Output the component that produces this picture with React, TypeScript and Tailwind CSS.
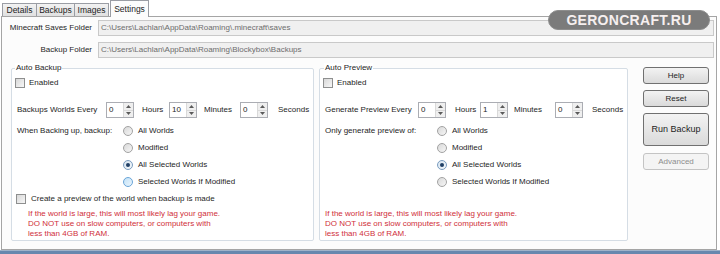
import React from "react";

function CheckBox() {
  return (
    <span className="block h-[10px] w-[10px] shrink-0 border border-[#8e8f8f] bg-linear-to-br from-[#d8d8d8] to-[#f7f7f7]" />
  );
}

function Radio({ checked = false, hover = false }: { checked?: boolean; hover?: boolean }) {
  return (
    <span
      className={
        hover
          ? "flex h-[10px] w-[10px] shrink-0 items-center justify-center rounded-full border border-[#6aa5d8] bg-linear-to-br from-[#c3e2f7] to-[#eaf5fd]"
          : checked
          ? "flex h-[10px] w-[10px] shrink-0 items-center justify-center rounded-full border border-[#7a9cbf] bg-linear-to-br from-[#d6e4f0] to-[#f4f8fb]"
          : "flex h-[10px] w-[10px] shrink-0 items-center justify-center rounded-full border border-[#a2a2a2] bg-linear-to-br from-[#d9d9d9] to-[#f6f6f6]"
      }
    >
      {checked && <span className="block h-[4px] w-[4px] rounded-full bg-[#1f3f66]" />}
    </span>
  );
}

function Spin({ value }: { value: string }) {
  return (
    <div className="flex h-[16px] w-[28px] shrink-0 border border-[#abadb3] bg-white">
      <span className="flex-1 pl-[2px] leading-[13px]">{value}</span>
      <div className="flex w-[10px] flex-col border-l border-[#d9d9d9] bg-[#efefef]">
        <div className="flex flex-1 items-center justify-center border-b border-[#d9d9d9]">
          <svg width="5" height="3" viewBox="0 0 5 3">
            <path d="M0 3L2.5 0L5 3Z" fill="#5a5a5a" />
          </svg>
        </div>
        <div className="flex flex-1 items-center justify-center">
          <svg width="5" height="3" viewBox="0 0 5 3">
            <path d="M0 0L2.5 3L5 0Z" fill="#5a5a5a" />
          </svg>
        </div>
      </div>
    </div>
  );
}

function Warning() {
  return (
    <div className="leading-[10px] text-[#d02f3a]">
      <p>If the world is large, this will most likely lag your game.</p>
      <p>DO NOT use on slow computers, or computers with</p>
      <p>less than 4GB of RAM.</p>
    </div>
  );
}

const choices = ["All Worlds", "Modified", "All Selected Worlds", "Selected Worlds If Modified"];

export default function App() {
  return (
    <div className="relative h-[254px] w-[720px] overflow-hidden bg-white font-['Liberation_Sans',Arial,sans-serif] text-[8px] text-[#1e1e1e]">
      {/* tabs */}
      <div className="relative z-10 flex h-[16px] items-end pl-[2px] text-[8.5px]">
        <div className="flex h-[13px] w-[35px] items-center justify-center border border-b-0 border-[#9a9da4] bg-linear-to-b from-[#f2f2f2] to-[#e0e0e0]">
          Details
        </div>
        <div className="-ml-px flex h-[13px] w-[39px] items-center justify-center border border-b-0 border-[#9a9da4] bg-linear-to-b from-[#f2f2f2] to-[#e0e0e0]">
          Backups
        </div>
        <div className="-ml-px flex h-[13px] w-[35px] items-center justify-center border border-b-0 border-[#9a9da4] bg-linear-to-b from-[#f2f2f2] to-[#e0e0e0]">
          Images
        </div>
        <div className="-mb-px ml-px flex h-[17px] w-[39px] items-start justify-center border border-b-0 border-[#9a9da4] bg-[#fcfcfc] pt-[2px]">
          Settings
        </div>
      </div>

      {/* settings panel */}
      <div className="ml-px mr-[3px] h-[234px] border border-[#a5a5a5] bg-[#fcfcfc] pt-[3px]">
        <div className="flex h-[16px] items-center">
          <span className="w-[90px] text-right">Minecraft Saves Folder</span>
          <div className="ml-[6px] mr-[2px] flex h-[16px] flex-1 items-center border border-[#c9c9c9] bg-[#f0f0f0] pl-[2px] text-[#6d6d6d]">
            C:\Users\Lachlan\AppData\Roaming\.minecraft\saves
          </div>
        </div>
        <div className="mt-[6px] flex h-[16px] items-center">
          <span className="w-[90px] text-right">Backup Folder</span>
          <div className="ml-[6px] mr-[2px] flex h-[16px] flex-1 items-center border border-[#c9c9c9] bg-[#f0f0f0] pl-[2px] text-[#6d6d6d]">
            C:\Users\Lachlan\AppData\Roaming\Blockybox\Backups
          </div>
        </div>

        <div className="mt-[10px] flex items-start pl-[9px]">
          {/* Auto Backup */}
          <div className="relative h-[173px] w-[303px] rounded-[2px] border border-[#d5dde5] bg-white pt-[8px]">
            <span className="absolute -top-[6px] left-[3px] bg-white px-px leading-[10px]">Auto Backup</span>
            <div className="flex h-[11px] items-center gap-[4px] pl-[3px]">
              <CheckBox />
              <span>Enabled</span>
            </div>
            <div className="mt-[14px] flex h-[16px] items-center pl-[5px]">
              <span className="w-[89px]">Backups Worlds Every</span>
              <Spin value="0" />
              <span className="w-[35px] pl-[8px]">Hours</span>
              <Spin value="10" />
              <span className="w-[43px] pl-[7px]">Minutes</span>
              <Spin value="0" />
              <span className="pl-[10px]">Seconds</span>
            </div>
            <div className="mt-[4px] flex flex-col pl-[5px]">
              {choices.map((c, i) => (
                <div key={c} className="flex h-[17px] items-center">
                  <span className="w-[106px]">{i === 0 ? "When Backing up, backup:" : ""}</span>
                  <Radio checked={i === 2} hover={i === 3} />
                  <span className="ml-[5px]">{c}</span>
                </div>
              ))}
            </div>
            <div className="mt-[3px] flex h-[11px] items-center gap-[5px] pl-[4px]">
              <CheckBox />
              <span>Create a preview of the world when backup is made</span>
            </div>
            <div className="mt-[5px] pl-[16px]">
              <Warning />
            </div>
          </div>

          {/* Auto Preview */}
          <div className="relative ml-[5px] h-[173px] w-[309px] rounded-[2px] border border-[#d5dde5] bg-white pt-[8px]">
            <span className="absolute -top-[6px] left-[4px] bg-white px-px leading-[10px]">Auto Preview</span>
            <div className="flex h-[11px] items-center gap-[4px] pl-[3px]">
              <CheckBox />
              <span>Enabled</span>
            </div>
            <div className="mt-[14px] flex h-[16px] items-center pl-[5px]">
              <span className="w-[93px]">Generate Preview Every</span>
              <Spin value="0" />
              <span className="w-[34px] pl-[9px]">Hours</span>
              <Spin value="1" />
              <span className="w-[47px] pl-[6px]">Minutes</span>
              <Spin value="0" />
              <span className="pl-[9px]">Seconds</span>
            </div>
            <div className="mt-[4px] flex flex-col pl-[5px]">
              {choices.map((c, i) => (
                <div key={c} className="flex h-[17px] items-center">
                  <span className="w-[112px]">{i === 0 ? "Only generate preview of:" : ""}</span>
                  <Radio checked={i === 2} />
                  <span className="ml-[5px]">{c}</span>
                </div>
              ))}
            </div>
            <div className="mt-[19px] pl-[5px]">
              <Warning />
            </div>
          </div>

          {/* buttons */}
          <div className="-mt-px ml-[15px] flex w-[66px] flex-col gap-[6px]">
            <button className="h-[17px] rounded-[3px] border border-[#707070] bg-linear-to-b from-[#f3f3f3] to-[#dadada]">
              Help
            </button>
            <button className="h-[17px] rounded-[3px] border border-[#707070] bg-linear-to-b from-[#f3f3f3] to-[#dadada]">
              Reset
            </button>
            <button className="h-[33px] rounded-[3px] border border-[#707070] bg-linear-to-b from-[#f3f3f3] to-[#dadada] text-[9px]">
              Run Backup
            </button>
            <button className="mt-px h-[17px] rounded-[3px] border border-[#c4c4c4] bg-[#f4f4f4] text-[#8d8d8d]">
              Advanced
            </button>
          </div>
        </div>
      </div>

      <div className="h-[4px] border-t border-[#9fb2c9] bg-[#6787ae]" />

      {/* watermark */}
      <div className="absolute left-[548px] top-[10px] flex h-[20px] w-[162px] items-center justify-center rounded-full border border-[#8d8d8d] bg-[#7b7b7b] text-[14px] font-bold tracking-[0.3px] text-[#f6efef]">
        GERONCRAFT.RU
      </div>
    </div>
  );
}
